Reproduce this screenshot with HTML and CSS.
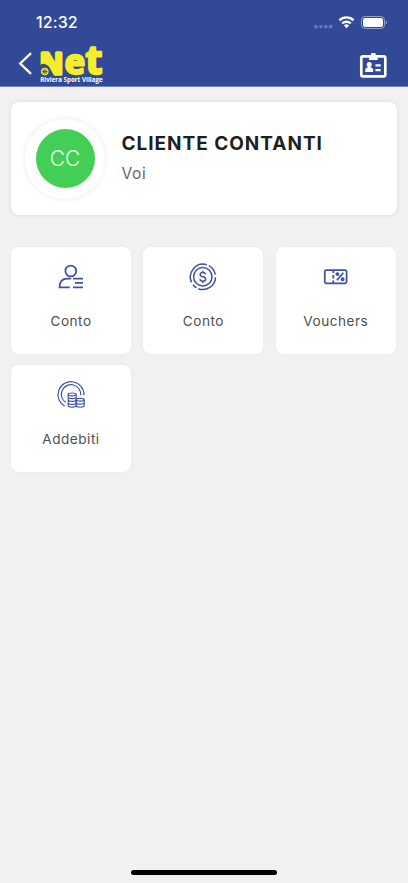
FILE: index.html
```html
<!DOCTYPE html>
<html lang="it">
<head>
<meta charset="utf-8">
<title>Riviera Sport Village</title>
<link rel="stylesheet" href="styles.css">
</head>
<body>
<div class="screen">
  <header class="header">
    <div class="status">
      <span class="time">12:32</span>
      <svg class="status-icons" width="76" height="20" viewBox="312 12 76 20">
        <g fill="#6878b4"><circle cx="316" cy="26.6" r="1.9"/><circle cx="320.9" cy="26.6" r="1.9"/><circle cx="325.8" cy="26.6" r="1.9"/><circle cx="330.7" cy="26.6" r="1.9"/></g>
        <g fill="none" stroke="#fff" stroke-width="2.3"><path d="M339.4 20.4a10 10 0 0 1 14.2 0"/><path d="M342.2 23.5a6.1 6.1 0 0 1 8.6 0"/></g>
        <path fill="#fff" d="M343.9 25.6a3.7 3.7 0 0 1 5.2 0l-2.6 2.7z"/>
        <rect x="361.5" y="16.5" width="23" height="12" rx="3.6" fill="none" stroke="#929dcb"/>
        <rect x="363" y="18" width="20" height="9" rx="2.2" fill="#fff"/>
        <path d="M385.7 20.4q1.4.5 1.4 2.1t-1.4 2.1z" fill="#929dcb"/>
      </svg>
    </div>
    <nav class="toolbar">
      <svg class="back" width="16" height="26" viewBox="17 51 16 26"><path d="M31 53.2 20.2 63.5 31 73.8" fill="none" stroke="#fff" stroke-width="2.3"/></svg>
      <svg class="logo" width="66" height="42" viewBox="39 44 66 42">
        <g class="logo-word">
          <text class="logo-n" transform="translate(39.7 74) scale(1.03 1)" font-size="28">N</text>
          <text transform="translate(64.8 74) scale(1.02 1)" font-size="33.5">e</text>
          <text transform="translate(85.4 74) scale(.97 1)" font-size="40">t</text>
        </g>
        <path d="M39 66q3-2.6 6-2.1 6 1.6 6.4 13H39z" fill="#324997"/>
        <circle cx="44.8" cy="71.6" r="3.8" fill="#f4ed27"/>
        <path d="M42 71.6h5.6M44.8 68.8v5.6M43 69.6q2 2 0 4M46.6 69.6q-2 2 0 4" fill="none" stroke="#324997" stroke-width=".8"/>
        <text x="40.2" y="82.4" textLength="62.5" lengthAdjust="spacingAndGlyphs" class="logo-sub">Riviera Sport Village</text>
      </svg>
      <svg class="badge" width="28" height="28" viewBox="359 52 28 28">
        <rect x="361.3" y="56.3" width="24" height="20" rx="1.6" fill="none" stroke="#fff" stroke-width="2.7"/>
        <path fill="#fff" d="M369 55h2v-1.2q0-.8.8-.8h3q.8 0 .8.8V55h2v5h-8.6z"/>
        <circle cx="369.2" cy="64.6" r="2.5" fill="#fff"/>
        <path fill="#fff" d="M368.2 65h2v2.2q3 .4 3 3V72h-8v-1.8q0-2.6 3-3z"/>
        <path d="M375.4 65.3h5.3M375.4 70.1h5.3" stroke="#fff" stroke-width="2.2"/>
      </svg>
    </nav>
  </header>
  <main class="content">
    <section class="profile">
      <div class="ring"><div class="avatar">CC</div></div>
      <div class="who"><h1>CLIENTE CONTANTI</h1><p>Voi</p></div>
    </section>
    <section class="tiles">
      <div class="tile">
        <svg width="30" height="30" viewBox="56 262 30 30" class="line thick"><circle cx="70.8" cy="271" r="5.4"/><path d="M69.8 287.3H59.5c0-6 3-8.8 8-8.8h3.7M73 278.5h10M75 282.9h8M73 287.3h10"/></svg>
        <span>Conto</span>
      </div>
      <div class="tile">
        <svg width="30" height="30" viewBox="188 262 30 30" class="line"><circle cx="202.8" cy="276.8" r="9.2"/><path d="M191.6 282.4A12.7 12.7 0 0 1 206.8 264.8M208.8 265.6A12.7 12.7 0 0 1 215.3 274.5M215.5 277.2A12.7 12.7 0 0 1 198.3 288.7M196.5 287.8A12.7 12.7 0 0 1 193 284.7"/><path d="M205.6 274.4q-.4-1.9-2.8-1.9-2.6 0-2.6 2.1 0 1.8 2.7 2.2 2.8.4 2.8 2.3 0 2.1-2.9 2.1-2.5 0-2.9-2.1M202.8 270.8v1.7M202.8 281.2v1.7"/></svg>
        <span>Conto</span>
      </div>
      <div class="tile">
        <svg width="30" height="30" viewBox="321 262 30 30" class="line thick"><rect x="324.8" y="270" width="21.8" height="13.3" rx="1.6"/><path d="M333.3 270v3M333.3 275v3.4M333.3 280.4v2.9M343.4 272.7l-6.6 7.6"/><circle cx="337.4" cy="274.1" r="1.1"/><circle cx="342.6" cy="279.3" r="1.1"/></svg>
        <span>Vouchers</span>
      </div>
      <div class="tile">
        <svg width="30" height="30" viewBox="56 380 30 30" class="line thin"><path d="M64.6 406A13 13 0 1 1 84 395.2M65.8 402.5A9.7 9.7 0 1 1 80.7 395.2"/><ellipse cx="72.2" cy="394.4" rx="4" ry="1.4"/><path d="M68.2 394.4v11.4q0 1.4 4 1.4t4-1.4v-11.4M68.2 397.2q0 1.4 4 1.4t4-1.4M68.2 400q0 1.4 4 1.4t4-1.4M68.2 402.9q0 1.4 4 1.4t4-1.4"/><ellipse cx="80.2" cy="399.7" rx="4" ry="1.4"/><path d="M76.2 399.7v6.1q0 1.4 4 1.4t4-1.4v-6.1M76.2 402.8q0 1.4 4 1.4t4-1.4"/></svg>
        <span>Addebiti</span>
      </div>
    </section>
  </main>
  <footer class="home"><div class="home-bar"></div></footer>
</div>
</body>
</html>
```
FILE: styles.css
```css
* { box-sizing: border-box; }
body { margin: 0; background: #f1f1f1; font-family: Inter, "Open Sans", sans-serif; }
.screen { height: 883px; display: flex; flex-direction: column; overflow: hidden; }
.header { height: 87px; background: #324997; border-bottom: 1px solid #7785b8; }
.status { display: flex; justify-content: space-between; height: 44px; padding: 12px 20px 0 36px; }
.time { color: #fff; font-size: 16px; line-height: 21px; font-weight: 500; letter-spacing: .1px; }
.toolbar { display: flex; height: 42px; padding-left: 17px; }
.back { margin-top: 7px; }
.logo { margin-left: 6px; overflow: visible; }
.logo-word { font-family: "Open Sans", Inter, sans-serif; font-weight: 700; fill: #f4ed27; stroke: #f4ed27; stroke-width: 2.4; stroke-linejoin: round; }
.logo-n { stroke-width: 3.4; }
.logo-sub { font-family: "Open Sans", sans-serif; font-size: 6.6px; font-weight: 700; fill: #fff; }
.badge { margin: 8px 21px 0 auto; }
.content { flex: 1; padding: 15px 11px 0; }
.profile { height: 113px; background: #fff; border-radius: 8px; box-shadow: 0 0 4px rgba(0,0,0,.1); display: flex; padding: 16.5px 14px; }
.ring { width: 80px; height: 80px; border-radius: 50%; display: grid; place-items: center; box-shadow: 0 0 6px rgba(0,0,0,.09); }
.avatar { width: 59px; height: 59px; border-radius: 50%; background: #43cf55; color: #e9faeb; font-size: 21px; font-weight: 300; line-height: 59px; text-align: center; }
.who { margin-left: 16.5px; padding-top: 12.5px; }
.who h1 { margin: 0; font-size: 19px; line-height: 26px; font-weight: 700; letter-spacing: .98px; color: #1e1e1e; white-space: nowrap; }
.who p { margin: 6px 0 0; font-size: 15.5px; line-height: 22px; letter-spacing: .6px; color: #666; }
.tiles { margin-top: 32px; display: grid; grid-template-columns: repeat(3, 120px); column-gap: 12.4px; row-gap: 11px; }
.tile { height: 107px; background: #fff; border-radius: 8px; box-shadow: 0 0 4px rgba(0,0,0,.035); display: flex; flex-direction: column; align-items: center; padding-top: 15px; }
.tile span { margin-top: 19px; font-size: 13.6px; line-height: 20px; letter-spacing: .5px; color: #505050; }
.line { fill: none; stroke: #3d52a2; stroke-width: 1.5; }
.thick { stroke-width: 1.75; }
.thin { stroke-width: 1.15; }
.home { height: 14px; display: flex; justify-content: center; }
.home-bar { width: 146px; height: 5px; border-radius: 3px; background: #000; margin-top: 1px; }
```
